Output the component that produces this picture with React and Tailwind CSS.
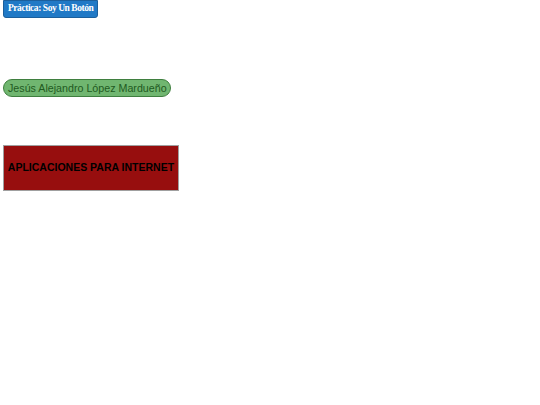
export default function App() {
  return (
    <div className="w-[540px] h-[405px] bg-white flex flex-col items-start pl-[3px]">
      <button className="h-[18px] px-[4px] bg-[#2079c6] border border-[#1b5f9c] rounded-b-[3px] text-white text-[9.5px] tracking-[-0.45px] font-bold font-['Liberation_Serif',serif] leading-none">
        Práctica: Soy Un Botón
      </button>

      <button className="mt-[61px] h-[18px] pl-[4px] pr-[3px] bg-[#70b670] border border-[#3f7f3f] rounded-full text-[#1f5a1f] text-[10.7px] font-['Liberation_Sans',sans-serif] leading-none">
        Jesús Alejandro López Mardueño
      </button>

      <div className="mt-[48px] w-[176px] h-[46px] bg-[#970e0e] border border-[#a0a0a0] flex items-center justify-center">
        <span className="text-black text-[10.5px] font-bold font-['Liberation_Sans',sans-serif] whitespace-nowrap">
          APLICACIONES PARA INTERNET
        </span>
      </div>
    </div>
  );
}
